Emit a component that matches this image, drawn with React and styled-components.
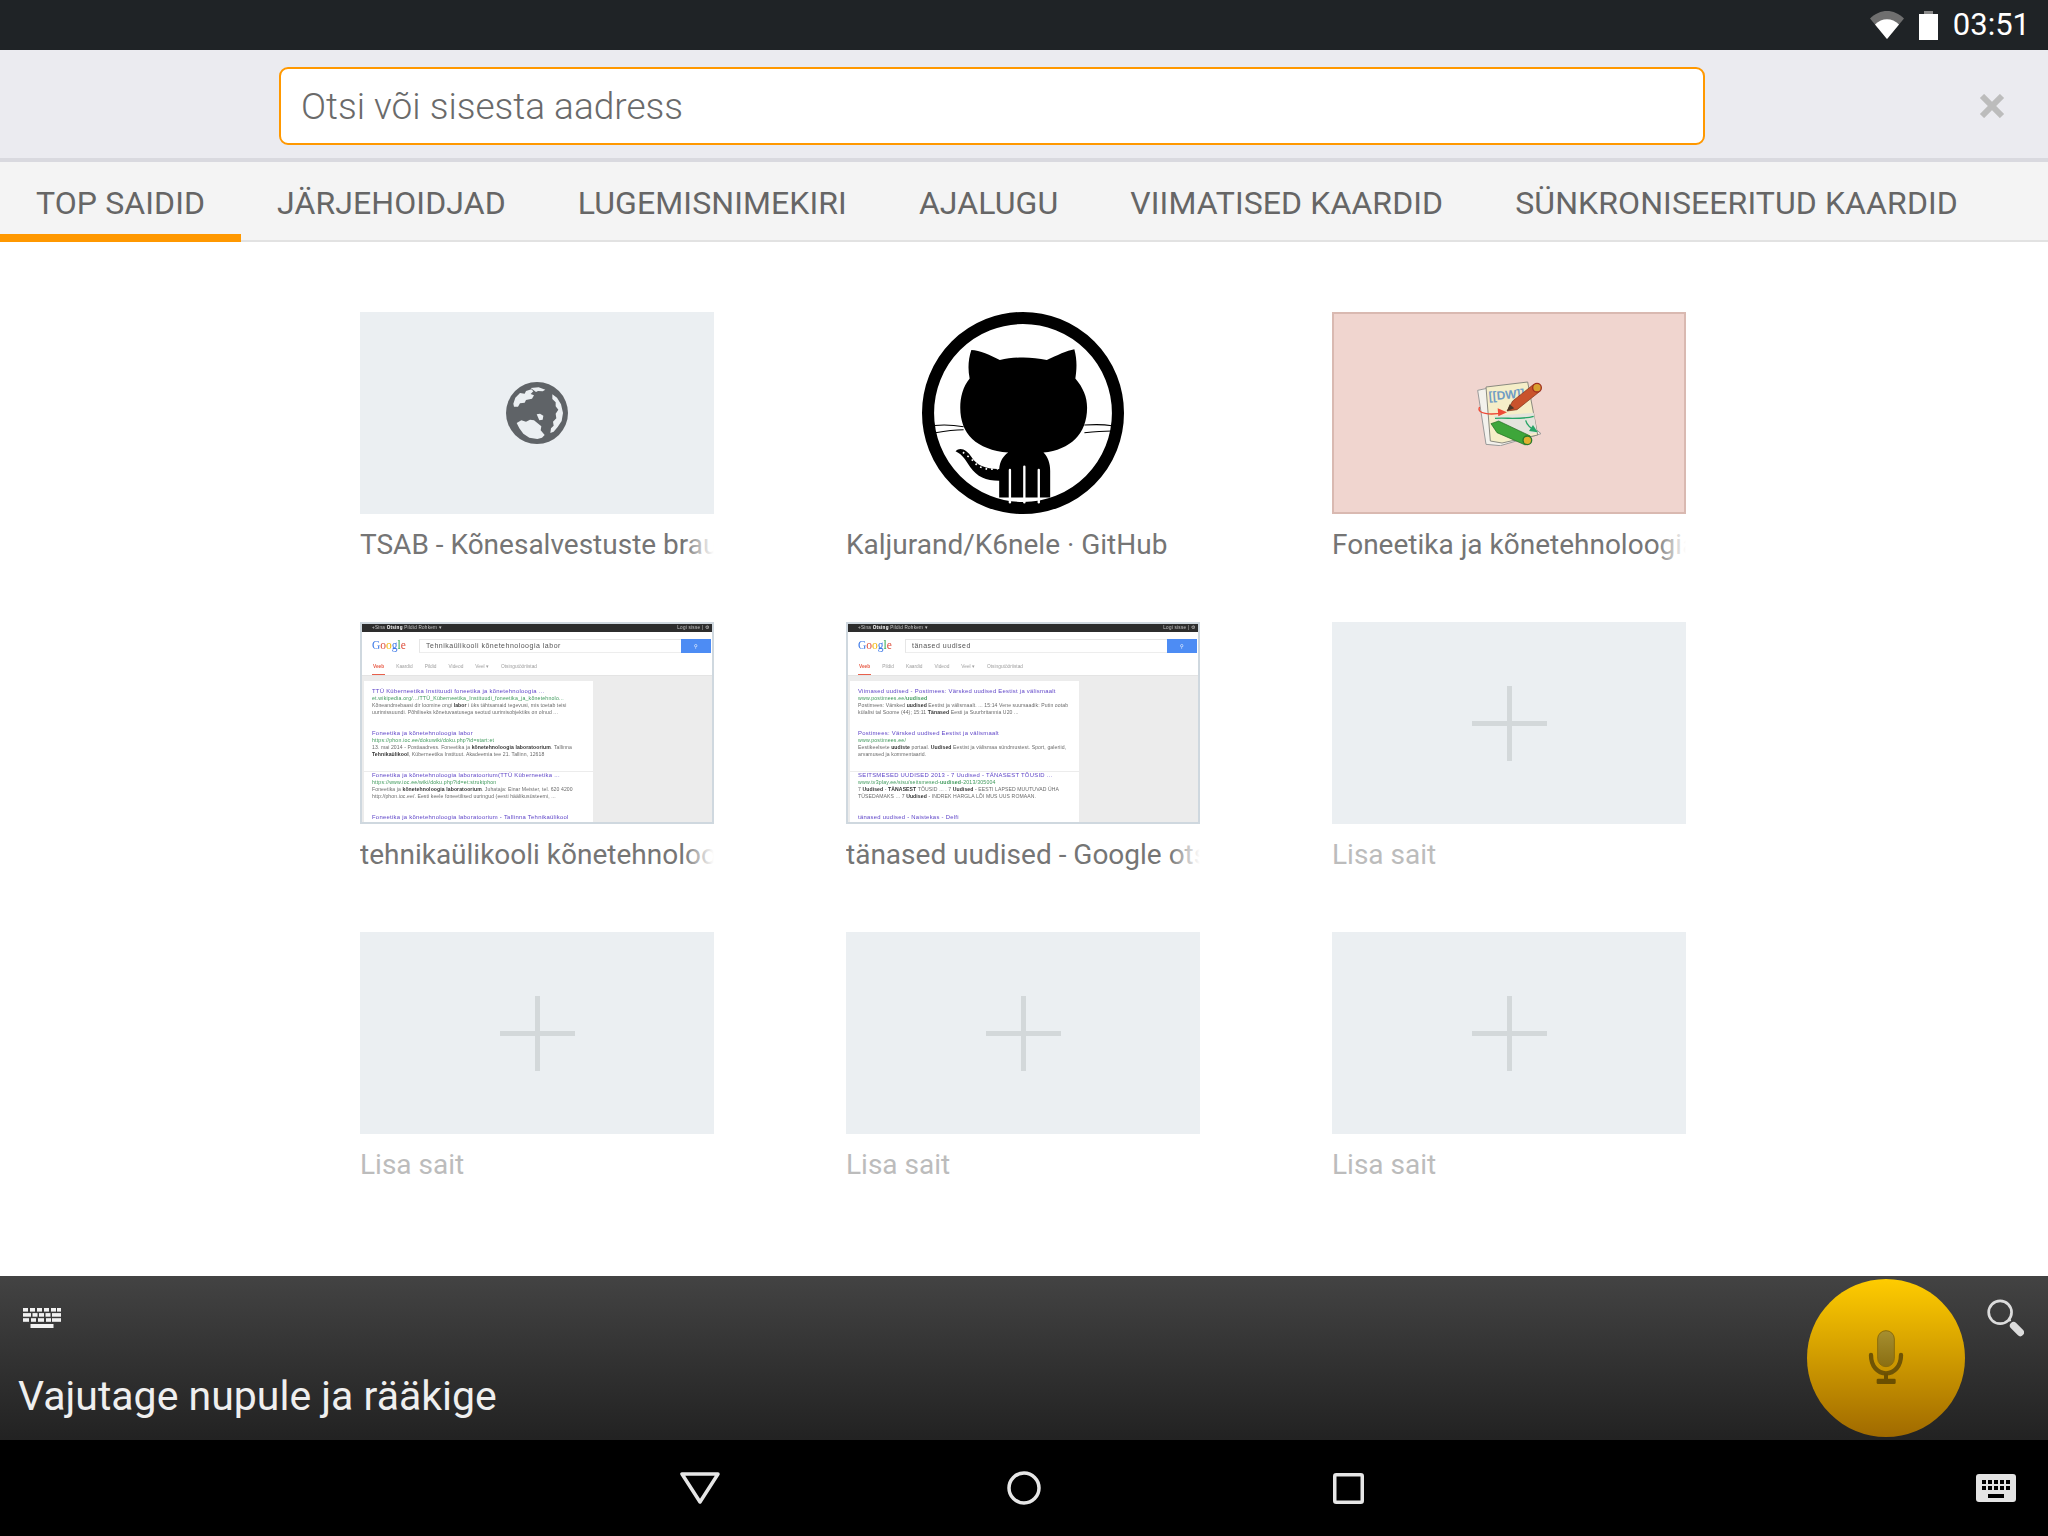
import React from "react";
import styled, { createGlobalStyle } from "styled-components";

const GlobalStyle = createGlobalStyle`
  html, body {
    margin: 0;
    padding: 0;
    background: #ffffff;
  }
  * {
    box-sizing: border-box;
  }
`;

const Screen = styled.div`
  width: 2048px;
  height: 1536px;
  display: flex;
  flex-direction: column;
  overflow: hidden;
  font-family: Roboto, "Liberation Sans", sans-serif;
  background: #ffffff;
`;

const StatusBar = styled.div`
  height: 50px;
  flex: none;
  background: #1f2326;
  display: flex;
  align-items: center;
  justify-content: flex-end;
  padding-right: 18px;
  color: #ffffff;
`;

const StatusIcon = styled.svg`
  display: block;
  flex: none;
  margin-right: ${(p) => p.$gap}px;
`;

const Clock = styled.div`
  font-size: 31px;
  line-height: 52px;
`;

const Toolbar = styled.div`
  height: 112px;
  flex: none;
  background: #ebebf0;
  border-bottom: 4px solid #d9d9df;
  padding: 17px 0 0 279px;
  display: flex;
  align-items: flex-start;
`;

const AddressBar = styled.div`
  width: 1426px;
  height: 78px;
  background: #ffffff;
  border: 2.5px solid #ff9800;
  border-radius: 9px;
  padding-left: 20px;
  font-size: 37px;
  font-weight: 300;
  line-height: 76px;
  color: #6a6a6a;
`;

const CloseButton = styled.svg`
  display: block;
  margin: 27px 0 0 274px;
`;

const TabBar = styled.div`
  height: 80px;
  flex: none;
  display: flex;
  background: #f4f4f4;
  border-bottom: 2px solid #e2e2e2;
`;

const Tab = styled.div`
  height: 80px;
  padding: 0 36px;
  font-size: 32px;
  letter-spacing: 0.1px;
  line-height: 82px;
  white-space: nowrap;
  color: #666666;
  box-shadow: ${(p) => (p.$active ? "inset 0 -8px 0 #ff9800" : "none")};
`;

const Content = styled.div`
  flex: 1;
  padding: 70px 0 0 360px;
`;

const SiteGrid = styled.div`
  display: grid;
  grid-template-columns: repeat(3, 354px);
  column-gap: 132px;
  row-gap: 46px;
`;

const Site = styled.div`
  width: 354px;
`;

const Tile = styled.div`
  width: 354px;
  height: 202px;
  display: flex;
  align-items: center;
  justify-content: center;
  overflow: hidden;
  background: ${(p) => p.$bg || "#ebeff2"};
  border: ${(p) => (p.$line ? `${p.$lineWidth || 2}px solid ${p.$line}` : "none")};
`;

const SiteLabel = styled.div`
  position: relative;
  height: 62px;
  font-size: 28px;
  line-height: 62px;
  white-space: nowrap;
  overflow: hidden;
  color: ${(p) => (p.$empty ? "#bcbcbc" : "#757575")};

  &::after {
    content: "";
    display: ${(p) => (p.$fade ? "block" : "none")};
    position: absolute;
    top: 0;
    right: 0;
    width: 30px;
    height: 100%;
    background: linear-gradient(to right, rgba(255, 255, 255, 0), #ffffff);
  }
`;

/* tiny google result page used as thumbnail */
const Serp = styled.div`
  width: 350px;
  height: 198px;
  background: #ececec;
  overflow: hidden;
  filter: blur(0.35px);
  font-family: "Liberation Sans", Arial, sans-serif;
`;

const SerpTopBar = styled.div`
  height: 8px;
  background: #2d2d2d;
  color: #c8c8c8;
  font-size: 4.6px;
  letter-spacing: 0.25px;
  line-height: 8px;
  padding: 0 3px 0 10px;
  display: flex;
  justify-content: space-between;
  white-space: nowrap;

  b {
    color: #ffffff;
  }
`;

const SerpHeader = styled.div`
  height: 44px;
  background: #ffffff;
  position: relative;
  border-bottom: 1px solid #e4e4e4;
`;

const SerpSearchRow = styled.div`
  height: 20px;
  padding-top: 7px;
  display: flex;
  align-items: flex-start;
`;

const SerpLogo = styled.div`
  width: 57px;
  padding-left: 10px;
  font-family: "Liberation Serif", serif;
  font-size: 11.5px;
  line-height: 13px;
  flex: none;
`;

const LogoLetter = styled.span`
  color: ${(p) => p.$color};
`;

const SerpSearch = styled.div`
  width: 262px;
  height: 14px;
  border-top: 1px solid #e6e6e6;
  border-left: 1px solid #e6e6e6;
  border-bottom: 1px solid #ededed;
  padding-left: 6px;
  font-size: 7px;
  letter-spacing: 0.5px;
  line-height: 12px;
  color: #555555;
  white-space: nowrap;
`;

const SerpButton = styled.div`
  width: 30px;
  height: 14px;
  background: #4d8cf4;
  flex: none;
  display: flex;
  align-items: center;
  justify-content: center;
  color: #ffffff;
  font-size: 5px;
`;

const SerpTabs = styled.div`
  display: flex;
  gap: 10px;
  margin-top: 8px;
  padding-left: 10px;
  font-size: 4.8px;
  line-height: 14px;
  color: #a0a0a0;
  white-space: nowrap;
`;

const SerpTab = styled.div`
  height: 15px;
  padding: 0 1px;
  color: ${(p) => (p.$active ? "#e8604c" : "#a0a0a0")};
  font-weight: ${(p) => (p.$active ? "bold" : "normal")};
  border-bottom: ${(p) => (p.$active ? "1px solid #e8604c" : "none")};
`;

const SerpCard = styled.div`
  width: 229px;
  margin: 5px 0 0 2px;
  background: #ffffff;
  padding-top: 7px;
`;

const Result = styled.div`
  height: 42px;
  padding: 0 8px;
  border-bottom: ${(p) => (p.$split ? "1px solid #ececec" : "none")};
  white-space: nowrap;
  overflow: hidden;
`;

const ResultTitle = styled.div`
  font-size: 5.9px;
  letter-spacing: 0.27px;
  line-height: 7px;
  color: #5f45c8;
`;

const ResultUrl = styled.div`
  font-size: 5.2px;
  letter-spacing: 0.2px;
  line-height: 7px;
  color: #3f9a5c;
`;

const ResultText = styled.div`
  font-size: 5.1px;
  letter-spacing: 0.1px;
  line-height: 7.2px;
  color: #6a6a6a;

  b {
    color: #333333;
  }
`;

const InputPanel = styled.div`
  height: 164px;
  flex: none;
  display: flex;
  padding: 3px 24px 0 18px;
  background: linear-gradient(to bottom, #434343, #222222);
`;

const PanelLeft = styled.div`
  flex: 1;
  padding-top: 29px;
`;

const PanelKeyboard = styled.svg`
  display: block;
  margin-left: 5px;
`;

const Prompt = styled.div`
  margin-top: 40px;
  font-size: 41px;
  line-height: 56px;
  color: #efefef;
`;

const MicButton = styled.div`
  width: 158px;
  height: 158px;
  border-radius: 50%;
  flex: none;
  display: flex;
  align-items: center;
  justify-content: center;
  background: linear-gradient(to bottom, #ffcc00, #a06a00);
`;

const SearchButton = styled.svg`
  display: block;
  flex: none;
  margin: 20px 0 0 22px;
`;

const NavBar = styled.div`
  height: 96px;
  flex: none;
  background: #000000;
  display: flex;
  align-items: center;
  padding: 0 32px 0 680px;
`;

const NavIcon = styled.svg`
  display: block;
  flex: none;
  margin-left: ${(p) => p.$gap || 0}px;
`;

const NavKeyboard = styled.svg`
  display: block;
  flex: none;
  margin-left: auto;
`;

const TABS = [
  "TOP SAIDID",
  "JÄRJEHOIDJAD",
  "LUGEMISNIMEKIRI",
  "AJALUGU",
  "VIIMATISED KAARDID",
  "SÜNKRONISEERITUD KAARDID",
];

const LOGO = [
  ["G", "#3b78e7"],
  ["o", "#dd4b39"],
  ["o", "#f4b400"],
  ["g", "#3b78e7"],
  ["l", "#2da94f"],
  ["e", "#dd4b39"],
];

const SERP_KOOL = {
  query: "Tehnikaülikooli kõnetehnoloogia labor",
  tabs: ["Veeb", "Kaardid", "Pildid", "Videod", "Veel ▾", "Otsingutööriistad"],
  results: [
    {
      title: "TTÜ Küberneetika Instituudi foneetika ja kõnetehnoloogia ...",
      url: "et.wikipedia.org/.../TTÜ_Küberneetika_Instituudi_foneetika_ja_kõnetehnolo...",
      text: [
        <>Kõneandmebaasi dir loomine ongi <b>labor</b> i üks tähtsamaid tegevusi, mis toetab teisi</>,
        <>uurimissuundi. Põhiliseks kõnetuvastusega seotud uurimisobjektiks on olnud ...</>,
      ],
    },
    {
      title: "Foneetika ja kõnetehnoloogia labor",
      url: "https://phon.ioc.ee/dokuwiki/doku.php?id=start:et",
      text: [
        <>13. mai 2014 - Postiaadress. Foneetika ja <b>kõnetehnoloogia laboratoorium</b>. Tallinna</>,
        <><b>Tehnikaülikool</b>, Küberneetika Instituut. Akadeemia tee 21. Tallinn, 12618</>,
      ],
      split: true,
    },
    {
      title: "Foneetika ja kõnetehnoloogia laboratoorium(TTÜ Küberneetika ...",
      url: "https://www.ioc.ee/wiki/doku.php?id=et:struktphon",
      text: [
        <>Foneetika ja <b>kõnetehnoloogia laboratoorium</b>. Juhataja: Einar Meister, tel. 620 4200</>,
        <>http://phon.ioc.ee/. Eesti keele foneetilised uuringud (eesti häälikusüsteemi, ...</>,
      ],
    },
    {
      title: "Foneetika ja kõnetehnoloogia laboratoorium - Tallinna Tehnikaülikool",
      url: "",
      text: [],
    },
  ],
};

const SERP_NEWS = {
  query: "tänased uudised",
  tabs: ["Veeb", "Pildid", "Kaardid", "Videod", "Veel ▾", "Otsingutööriistad"],
  results: [
    {
      title: "Viimased uudised - Postimees: Värsked uudised Eestist ja välismaalt",
      url: <>www.postimees.ee/<b>uudised</b></>,
      text: [
        <>Postimees: Värsked <b>uudised</b> Eestist ja välismaalt. ... 15:14 Vene suursaadik: Putin ootab</>,
        <>külalisi tal Soome (44); 15:11 <b>Tänased</b> Eesti ja Suurbritannia U20 ...</>,
      ],
    },
    {
      title: "Postimees: Värsked uudised Eestist ja välismaalt",
      url: "www.postimees.ee/",
      text: [
        <>Eestikeelsete <b>uudiste</b> portaal. <b>Uudised</b> Eestist ja välismaa sündmustest. Sport, galeriid,</>,
        <>arvamused ja kommentaarid.</>,
      ],
      split: true,
    },
    {
      title: "SEITSMESED UUDISED 2013 - 7 Uudised - TÄNASEST TÕUSID ...",
      url: <>www.tv3play.ee/sisu/seitsmesed-<b>uudised</b>-2013/305004</>,
      text: [
        <>7 <b>Uudised</b> - <b>TÄNASEST</b> TÕUSID ... . 7 <b>Uudised</b> - EESTI LAPSED MUUTUVAD ÜHA</>,
        <>TÜSEDAMAKS ... 7 <b>Uudised</b> - INDREK HARGLA LÕI MUS UUS ROMAAN.</>,
      ],
    },
    {
      title: "tänased uudised - Naistekas - Delfi",
      url: "",
      text: [],
    },
  ],
};

const GoogleThumb = ({ data }) => (
  <Serp>
    <SerpTopBar>
      <span>+Sina <b>Otsing</b> Pildid Rohkem ▾</span>
      <span>Logi sisse | ⚙</span>
    </SerpTopBar>
    <SerpHeader>
      <SerpSearchRow>
        <SerpLogo>
          {LOGO.map(([letter, color], i) => (
            <LogoLetter key={i} $color={color}>{letter}</LogoLetter>
          ))}
        </SerpLogo>
        <SerpSearch>{data.query}</SerpSearch>
        <SerpButton>⚲</SerpButton>
      </SerpSearchRow>
      <SerpTabs>
        {data.tabs.map((t, i) => (
          <SerpTab key={t} $active={i === 0}>{t}</SerpTab>
        ))}
      </SerpTabs>
    </SerpHeader>
    <SerpCard>
      {data.results.map((r, i) => (
        <Result key={i} $split={r.split}>
          <ResultTitle>{r.title}</ResultTitle>
          <ResultUrl>{r.url}</ResultUrl>
          {r.text.map((line, j) => (
            <ResultText key={j}>{line}</ResultText>
          ))}
        </Result>
      ))}
    </SerpCard>
  </Serp>
);

const Plus = () => (
  <svg width="75" height="75" viewBox="0 0 75 75">
    <path d="M35 0h5v35h35v5H40v35h-5V40H0v-5h35z" fill="#d3d8da" />
  </svg>
);

const GlobeIcon = () => (
  <svg width="62" height="62" viewBox="498 275 186 186">
    <circle cx="591" cy="368" r="93" fill="#5f6367" />
    <g fill="#ebeff2">
      <path d="M520 340l6-18 14-14 14 2 4-8 16-5 6 6-8 8 10 4-6 10-18 4-4 8-14 2-6 10-12 0z" />
      <path d="M572 293l24-2 20 7-8 5-14-1-6 3z" />
      <path d="M637 312l14 10 12 20 6 26-4 24-12 18-12 14-10 4 2-14 8-8-2-12 10-10-2-14 8-12-8-10 0-12-10-10z" />
      <path d="M530 398l14-8 14 4 12-6 12 2 10 8 12 10-2 12 12 14-8 8-14 4-24-4-18-12-12-16z" />
      <path d="M590 372l10-2 10 6-2 12-10 2z" />
    </g>
  </svg>
);

const GitHubLogo = () => (
  <svg width="202" height="202" viewBox="68 37 602 602">
    <circle cx="369" cy="338" r="283" fill="#ffffff" stroke="#000000" strokeWidth="36" />
    <path
      d="M105 375C135 372 165 374 192 379M108 397C135 392 165 388 192 388M552 374C580 372 610 372 634 376M552 397C580 394 610 392 634 392"
      fill="none"
      stroke="#000000"
      strokeWidth="3"
    />
    <path
      d="M215 150C240 150 272 166 300 180C345 170 395 170 440 180C470 166 500 152 522 148C531 180 529 210 525 235C548 262 560 290 560 322C560 400 510 447 430 456C444 470 450 490 450 510L450 590L298 590L298 540C258 540 232 528 212 500C200 482 190 462 168 452C182 438 202 448 216 470C230 494 260 506 298 505C300 482 310 466 325 456C230 447 182 400 182 322C182 290 190 260 210 235C204 205 206 178 215 150Z"
      fill="#000000"
    />
    <path
      d="M190 455L215 475L235 497L265 506L295 504"
      fill="none"
      stroke="#ffffff"
      strokeWidth="5"
      strokeDasharray="5 12"
    />
    <g fill="none" stroke="#ffffff" strokeLinecap="round" strokeWidth="7">
      <path d="M330 508V604" />
      <path d="M373 498V604" />
      <path d="M416 508V604" />
    </g>
  </svg>
);

const DokuWikiIcon = () => (
  <svg width="65" height="65" viewBox="470 240 195 195">
    <path d="M472 268L500 262L662 398L640 405L540 434L497 430Z" fill="#f3f1ec" stroke="#9a9a9a" strokeWidth="3" />
    <path d="M497 258L622 243L652 402L545 426L510 420Z" fill="#f5eec8" stroke="#8a8a80" strokeWidth="3" />
    <path d="M520 345L640 335L650 395L560 410Z" fill="#e4e4dc" />
    <text x="506" y="298" fontFamily="Liberation Sans, sans-serif" fontSize="36" fontWeight="bold" fill="#6f9cc4" transform="rotate(-5 506 298)">[[DW]]</text>
    <path d="M478 318C466 338 510 344 552 334" fill="none" stroke="#ee4a36" strokeWidth="4" />
    <path d="M532 322L560 334L534 346Z" fill="#ee4a36" />
    <path d="M524 352C560 350 610 356 640 346M616 358C620 375 636 385 650 392" fill="none" stroke="#27a567" strokeWidth="4" />
    <path d="M638 372L652 394L626 390Z" fill="#27a567" />
    <path d="M560 330L577 300L640 250L660 270L590 326Z" fill="#c9532c" stroke="#7a2f15" strokeWidth="2" />
    <path d="M560 330L568 310L582 322Z" fill="#4a3a2a" />
    <circle cx="650" cy="260" r="13" fill="#d8a030" stroke="#a03020" strokeWidth="4" />
    <path d="M512 368L535 360L630 405L615 432L530 395Z" fill="#3ea63a" stroke="#1c6a1c" strokeWidth="2" />
    <circle cx="621" cy="418" r="13" fill="#e0b030" stroke="#2a7a2a" strokeWidth="4" />
  </svg>
);

const MicIcon = () => (
  <svg width="36" height="56" viewBox="325 210 108 168">
    <defs>
      <linearGradient id="micBody" x1="0" y1="0" x2="0" y2="1">
        <stop offset="0" stopColor="#a68f30" />
        <stop offset="1" stopColor="#8a6e12" />
      </linearGradient>
    </defs>
    <rect x="354" y="212" width="50" height="108" rx="25" fill="url(#micBody)" stroke="#8b6c0a" strokeWidth="3" />
    <path d="M334 285C334 320 355 340 379 340C403 340 424 320 424 285" fill="none" stroke="#6f5405" strokeWidth="13" strokeLinecap="round" />
    <path d="M373 340h12v18h-12z" fill="#6b4f00" />
    <rect x="351" y="356" width="57" height="16" rx="4" fill="#6b4f00" />
  </svg>
);

const SearchGlyph = () => (
  <SearchButton width="37" height="38" viewBox="683 118 110 112">
    <circle cx="722" cy="157" r="34" fill="none" stroke="#dcdcdc" strokeWidth="8" />
    <path d="M746 182l8-2" stroke="#dcdcdc" strokeWidth="6" />
    <path d="M762 197l20 20" stroke="#dcdcdc" strokeWidth="22" strokeLinecap="round" />
  </SearchButton>
);

const PANEL_KEY_ROWS = [
  [[0, 5], [7, 5], [14, 5], [21, 5], [28, 5], [34, 4]],
  [[0, 8], [9.5, 5], [16, 5], [22.5, 5], [29, 9]],
  [[0, 6], [8, 5], [15, 6], [23, 5], [29, 9]],
];

const PanelKeyboardIcon = () => (
  <PanelKeyboard width="38" height="20" viewBox="0 0 38 20">
    {PANEL_KEY_ROWS.map((row, y) =>
      row.map(([x, w]) => <rect key={`${y}-${x}`} x={x} y={y * 5.1} width={w} height="3.6" fill="#f2f2f2" />)
    )}
    <rect x="7.5" y="16" width="23" height="4" fill="#f2f2f2" />
  </PanelKeyboard>
);

const NavKeyboardIcon = () => (
  <NavKeyboard width="40" height="28" viewBox="0 0 40 28">
    <rect width="40" height="28" rx="3" fill="#e4e4e4" />
    {[0, 1].map((row) =>
      [6, 12, 18, 24, 30].map((x) => (
        <rect key={`${row}-${x}`} x={x} y={6 + row * 6} width="4" height="4" fill="#000000" />
      ))
    )}
    <rect x="12" y="20" width="16" height="4" fill="#000000" />
  </NavKeyboard>
);

const SITES = [
  { label: "TSAB - Kõnesalvestuste brauser", tile: <Tile><GlobeIcon /></Tile> },
  { label: "Kaljurand/K6nele · GitHub", tile: <Tile $bg="#ffffff"><GitHubLogo /></Tile>, plain: true },
  {
    label: "Foneetika ja kõnetehnoloogia labor",
    tile: <Tile $bg="#f0d5cf" $line="#d9b9b1"><DokuWikiIcon /></Tile>,
  },
  {
    label: "tehnikaülikooli kõnetehnoloogia labor",
    tile: <Tile $bg="#ffffff" $line="#cfd8df"><GoogleThumb data={SERP_KOOL} /></Tile>,
  },
  {
    label: "tänased uudised - Google otsing",
    tile: <Tile $bg="#ffffff" $line="#cfd8df"><GoogleThumb data={SERP_NEWS} /></Tile>,
  },
  { empty: true },
  { empty: true },
  { empty: true },
  { empty: true },
];

export default function App() {
  return (
    <Screen>
      <GlobalStyle />
      <StatusBar>
        <StatusIcon $gap={15} width="34" height="28" viewBox="0 0 34 28">
          <path d="M17 28L0 7.5C10 -2.5 24 -2.5 34 7.5Z" fill="#6f6f6f" />
          <path d="M17 28L5 13.5C12 6.5 22 6.5 29 13.5Z" fill="#ffffff" />
        </StatusIcon>
        <StatusIcon $gap={15} width="19" height="29" viewBox="0 0 19 29">
          <rect x="5" y="0" width="9" height="4" fill="#8a8a8a" />
          <rect x="0" y="3" width="19" height="26" fill="#ffffff" />
        </StatusIcon>
        <Clock>03:51</Clock>
      </StatusBar>

      <Toolbar>
        <AddressBar>Otsi või sisesta aadress</AddressBar>
        <CloseButton width="26" height="24" viewBox="0 0 26 24">
          <path d="M3 2L23 22M23 2L3 22" stroke="#bcbcbc" strokeWidth="6" />
        </CloseButton>
      </Toolbar>

      <TabBar>
        {TABS.map((t, i) => (
          <Tab key={t} $active={i === 0}>{t}</Tab>
        ))}
      </TabBar>

      <Content>
        <SiteGrid>
          {SITES.map((s, i) => (
            <Site key={i}>
              {s.empty ? <Tile><Plus /></Tile> : s.tile}
              <SiteLabel $empty={s.empty} $fade={!s.empty && !s.plain}>
                {s.empty ? "Lisa sait" : s.label}
              </SiteLabel>
            </Site>
          ))}
        </SiteGrid>
      </Content>

      <InputPanel>
        <PanelLeft>
          <PanelKeyboardIcon />
          <Prompt>Vajutage nupule ja rääkige</Prompt>
        </PanelLeft>
        <MicButton>
          <MicIcon />
        </MicButton>
        <SearchGlyph />
      </InputPanel>

      <NavBar>
        <NavIcon width="40" height="32" viewBox="0 0 40 32">
          <path d="M2 2H38L20 30Z" fill="none" stroke="#e6e6e6" strokeWidth="3.5" strokeLinejoin="round" />
        </NavIcon>
        <NavIcon $gap={287} width="34" height="34" viewBox="0 0 34 34">
          <circle cx="17" cy="17" r="15" fill="none" stroke="#e6e6e6" strokeWidth="3.5" />
        </NavIcon>
        <NavIcon $gap={292} width="31" height="31" viewBox="0 0 31 31">
          <rect x="1.75" y="1.75" width="27.5" height="27.5" rx="1.5" fill="none" stroke="#e6e6e6" strokeWidth="3.5" />
        </NavIcon>
        <NavKeyboardIcon />
      </NavBar>
    </Screen>
  );
}
